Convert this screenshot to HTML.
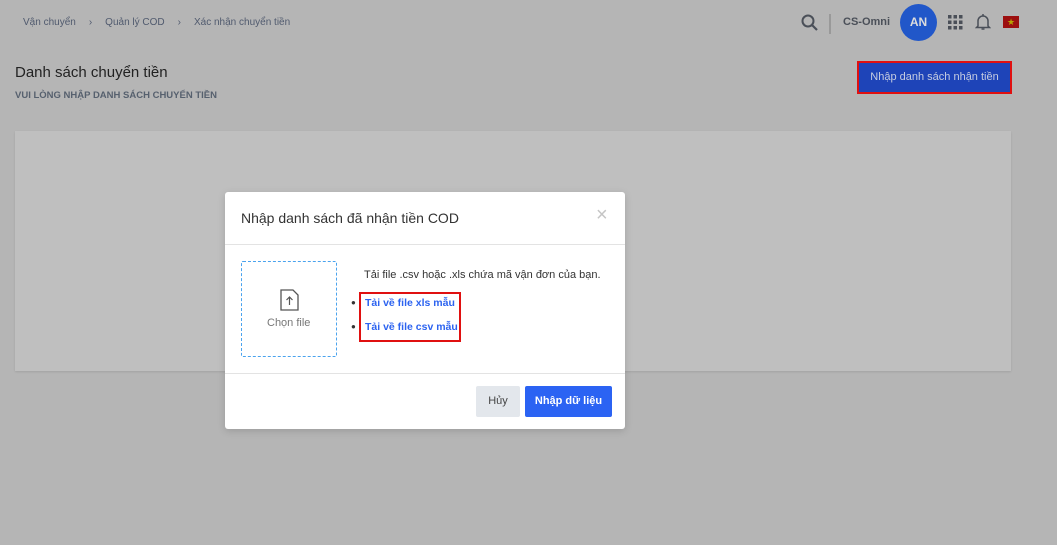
<!DOCTYPE html>
<html><head><meta charset="utf-8"><style>
*{box-sizing:border-box;margin:0;padding:0}
body{width:1057px;height:545px;background:#b5b5b5;font-family:"Liberation Sans",sans-serif;position:relative;overflow:hidden}
.a{position:absolute}
</style></head><body>
<div class="a" style="left:23px;top:17px;font-size:10px;color:#505a6e;white-space:nowrap">Vận chuyển<span style="margin:0 13px 0 13px">›</span>Quản lý COD<span style="margin:0 13px 0 13px">›</span>Xác nhận chuyển tiền</div>
<div class="a" style="left:15px;top:64px;font-size:15px;color:#222">Danh sách chuyển tiền</div>
<div class="a" style="left:15px;top:90px;font-size:9.5px;font-weight:bold;color:#56606e">VUI LÒNG NHẬP DANH SÁCH CHUYỂN TIỀN</div>
<svg class="a" style="left:801px;top:13px" width="18" height="20" viewBox="0 0 18 20"><circle cx="7" cy="8" r="5.5" fill="none" stroke="#4a4f58" stroke-width="2"/><path d="M11 12l5 5" stroke="#4a4f58" stroke-width="2.2"/></svg>
<div class="a" style="left:829px;top:14px;width:2px;height:20px;background:#999"></div>
<div class="a" style="left:843px;top:16px;font-size:11px;font-weight:bold;color:#4a4f58">CS-Omni</div>
<div class="a" style="left:900px;top:4px;width:37px;height:37px;border-radius:50%;background:#2157c9;color:#ddd;font-size:12px;font-weight:bold;text-align:center;line-height:37px">AN</div>
<svg class="a" style="left:948px;top:15px" width="15" height="15"><g fill="#4a4f58"><rect x="0" y="0" width="3.5" height="3.5"/><rect x="5.5" y="0" width="3.5" height="3.5"/><rect x="11" y="0" width="3.5" height="3.5"/><rect x="0" y="5.5" width="3.5" height="3.5"/><rect x="5.5" y="5.5" width="3.5" height="3.5"/><rect x="11" y="5.5" width="3.5" height="3.5"/><rect x="0" y="11" width="3.5" height="3.5"/><rect x="5.5" y="11" width="3.5" height="3.5"/><rect x="11" y="11" width="3.5" height="3.5"/></g></svg>
<svg class="a" style="left:975px;top:13px" width="16" height="18" viewBox="0 0 16 18"><path d="M3 13V8a5 5 0 0110 0v5l1.5 1.5h-13z" fill="none" stroke="#4a4f58" stroke-width="1.5"/><path d="M6.5 16h3" stroke="#4a4f58" stroke-width="1.5"/><path d="M8 1v2" stroke="#4a4f58" stroke-width="1.5"/></svg>
<div class="a" style="left:1003px;top:16px;width:16px;height:12px;background:#9c0f0f;color:#b9a400;font-size:9px;text-align:center;line-height:12px">★</div>
<div class="a" style="left:857px;top:61px;width:155px;height:33px;border:2px solid #e01010;background:#1e44b8;color:#c6cde0;font-size:11px;text-align:center;line-height:29px">Nhập danh sách nhận tiền</div>
<div class="a" style="left:15px;top:131px;width:996px;height:240px;background:#bfbfbf;box-shadow:0 1px 2px rgba(0,0,0,.1)"></div>
<div class="a" style="left:225px;top:192px;width:400px;height:237px;background:#fff;border-radius:3px;box-shadow:0 2px 8px rgba(0,0,0,.15)">
 <div class="a" style="left:16px;top:18px;font-size:14px;color:#333">Nhập danh sách đã nhận tiền COD</div>
 <div class="a" style="left:371px;top:12px;font-size:20px;color:#c5c5c5">×</div>
 <div class="a" style="left:0;top:52px;width:400px;height:1px;background:#e3e3e3"></div>
 <div class="a" style="left:16px;top:69px;width:96px;height:96px;border:1px dashed #4aa3ee;border-radius:2px"></div>
 <svg class="a" style="left:55px;top:97px" width="20" height="22" viewBox="0 0 20 22"><path d="M1 1h12l5 5v15H1z" fill="none" stroke="#555" stroke-width="1.3"/><path d="M9.5 16V8M6.5 11l3-3 3 3" fill="none" stroke="#555" stroke-width="1.2"/></svg>
 <div class="a" style="left:42px;top:125px;font-size:11px;color:#777">Chọn file</div>
 <div class="a" style="left:139px;top:77px;font-size:11px;color:#333">Tải file .csv hoặc .xls chứa mã vận đơn của bạn.</div>
 <div class="a" style="left:134px;top:100px;width:102px;height:50px;border:2px solid #e01010"></div>
 <div class="a" style="left:126px;top:106px;font-size:8px;color:#333">●</div>
 <div class="a" style="left:126px;top:130px;font-size:8px;color:#333">●</div>
 <div class="a" style="left:140px;top:105px;font-size:10.5px;font-weight:bold;color:#2c63f0">Tải về file xls mẫu</div>
 <div class="a" style="left:140px;top:129px;font-size:10.5px;font-weight:bold;color:#2c63f0">Tải về file csv mẫu</div>
 <div class="a" style="left:0;top:181px;width:400px;height:1px;background:#e3e3e3"></div>
 <div class="a" style="left:251px;top:194px;width:44px;height:31px;background:#e3e7ec;border-radius:2px;font-size:11px;color:#444;text-align:center;line-height:31px">Hủy</div>
 <div class="a" style="left:300px;top:194px;width:87px;height:31px;background:#2b63f3;border-radius:2px;font-size:11px;font-weight:bold;color:#fff;text-align:center;line-height:31px">Nhập dữ liệu</div>
</div>
</body></html>
